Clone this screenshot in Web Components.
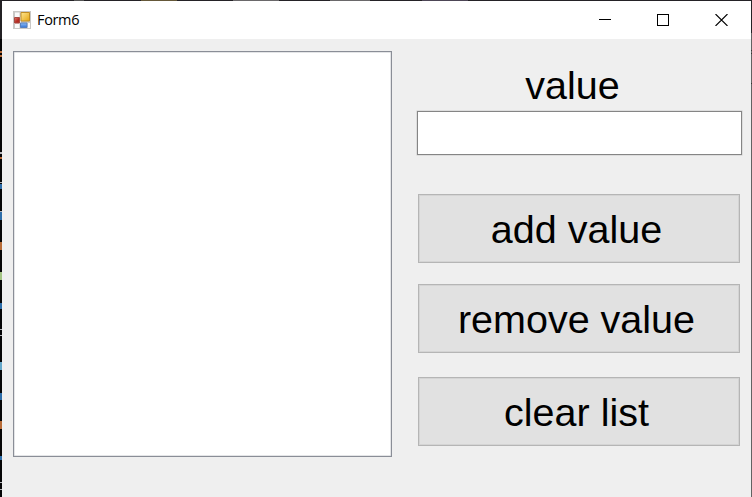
<!DOCTYPE html>
<html lang="en"><head><meta charset="utf-8"><title>Form6</title>
<style>html,body{margin:0;width:752px;height:497px;overflow:hidden;background:#232124}</style></head>
<body><form-window></form-window>
<script>
const define=(name,html)=>customElements.define(name,class extends HTMLElement{
  constructor(){super();this.attachShadow({mode:'open'}).innerHTML=html}
});
define('app-icon',`<style>:host{display:block;width:18px;height:18px}svg{display:block}</style>
<svg width="18" height="18" viewBox="0 0 18 18">
<defs><linearGradient id="y" x2="1" y2="1"><stop stop-color="#ffe792"/><stop offset="1" stop-color="#e5a512"/></linearGradient>
<linearGradient id="r" x2="1" y2="1"><stop stop-color="#e07a70"/><stop offset=".6" stop-color="#b42a20"/></linearGradient>
<linearGradient id="b" x2="0" y2="1"><stop stop-color="#8dbdf5"/><stop offset="1" stop-color="#3474d6"/></linearGradient></defs>
<path fill="#c9c8c6" d="M0 0h18v18H0z"/><path fill="#fafafa" d="M2 1.5h4.5V6H2zM2 13h4.5v4H2zM14.500 12h2.500v5h-2.500z"/>
<path fill="#e4e4e4" d="M1 6h7v7H1z"/>
<path fill="url(#y)" stroke="#c18d22" d="M8 1.500h8.500V10H8z"/>
<path fill="url(#r)" stroke="#a74a42" d="M1.500 6.500h5V12h-5z"/>
<path fill="url(#b)" stroke="#5680c0" d="M7.500 12H14v4.500H7.500z"/></svg>`);
define('caption-buttons',`<style>:host{display:flex;gap:46px;align-items:center}svg{display:block;shape-rendering:crispEdges}.close{shape-rendering:auto}</style>
<svg width="12" height="12"><path stroke="#000" d="M0 5.500h12"/></svg>
<svg width="12" height="12"><path fill="none" stroke="#000" d="M.5.5h11v11H.5z"/></svg>
<svg class="close" width="13" height="12"><path stroke="#000" stroke-width="1.100" d="M.5 0l12 12M12.500 0l-12 12"/></svg>`);
define('title-bar',`<style>:host{display:flex;align-items:center;height:38px;box-sizing:border-box;background:#fff;padding:0 23px 0 11px;color:#000}
.t{margin-left:6px;font:14.5px/20px "Open Sans","Noto Sans",sans-serif;letter-spacing:-.35px;flex:1}</style>
<app-icon></app-icon><span class="t"><slot></slot></span><caption-buttons></caption-buttons>`);
define('list-box',`<style>:host{display:block;box-sizing:border-box;width:379px;height:406px;background:#fff;border:1px solid #8a8e97;box-shadow:inset 0 0 0 .5px #c9cbd0}</style>`);
define('text-box',`<style>:host{display:block;box-sizing:border-box;width:325px;height:44px;background:#fff;border:1px solid #858585;box-shadow:0 0 0 .5px #ccc}</style>`);
define('push-button',`<style>:host{display:flex;box-sizing:border-box;width:322px;height:69px;margin-left:1px;background:#e1e1e1;border:1px solid #b5b5b5;box-shadow:inset 0 0 0 1px #d4d4d4;align-items:center;justify-content:center;padding-right:5px;font:39.5px/44px "Liberation Sans",Arial,sans-serif;color:#000;white-space:nowrap}</style><slot></slot>`);
define('field-label',`<style>:host{display:block;width:311px;text-align:center;font:39.5px/44px "Liberation Sans",Arial,sans-serif;color:#000}</style><slot></slot>`);
define('desktop-edge',`<style>:host{display:block;position:absolute;inset:0}svg{display:block}</style>
<svg width="752" height="497" shape-rendering="crispEdges">
<path fill="#050506" d="M0 39h2v458H0z"/><path fill="#242226" d="M0 0h752v1H0z"/>
<path fill="#655839" d="M141 0h36v1h-36z"/><path fill="#6a686a" d="M233 0h46v1h-46zM330 0h40v1h-40z"/><path fill="#4d4656" d="M422 0h46v1h-46z"/><path fill="#555" d="M74 0h10v1H74z"/>
<path fill="#242226" d="M751 0h1v33h-1z"/><path fill="#626262" d="M751 33h1v464h-1z"/><path fill="#333" d="M751 50h1v1h-1zM751 53h1v1h-1zM751 83h1v1h-1z"/>
<path fill="#b76b37" d="M0 51h2v2H0zM0 55h2v2H0zM0 157h2v2H0zM0 242h2v8H0zM0 421h2v8H0z"/>
<path fill="#b5b6bb" d="M0 152h2v2H0zM0 182h2v1H0zM0 211h2v1H0zM0 329h2v1H0zM0 335h2v1H0zM0 482h2v1H0zM0 489h2v1H0z"/>
<path fill="#2d6da9" d="M0 184h2v5H0zM0 212h2v8H0zM0 303h2v6H0zM0 393h2v7H0zM0 456h2v4H0z"/>
<path fill="#a4c484" d="M0 272h2v8H0z"/><path fill="#65a8ca" d="M0 362h2v8H0z"/></svg>`);
define('form-window',`<style>
:host{display:block;position:relative;box-sizing:border-box;width:752px;height:497px;padding:1px 1px 0 2px}
main{position:relative;z-index:1;height:496px;background:#efefef}
.body{display:flex;gap:25px;padding:12px 0 0 11px}
.side{display:flex;flex-direction:column;padding-top:12px}
text-box{margin-top:4px;margin-bottom:39px}push-button+push-button{margin-top:21px}push-button:last-child{margin-top:24px}
</style><desktop-edge></desktop-edge><main><title-bar>Form6</title-bar><div class="body"><list-box></list-box><div class="side">
<field-label>value</field-label><text-box></text-box><push-button>add value</push-button><push-button>remove value</push-button><push-button>clear list</push-button></div></div></main>`);
</script></body></html>
